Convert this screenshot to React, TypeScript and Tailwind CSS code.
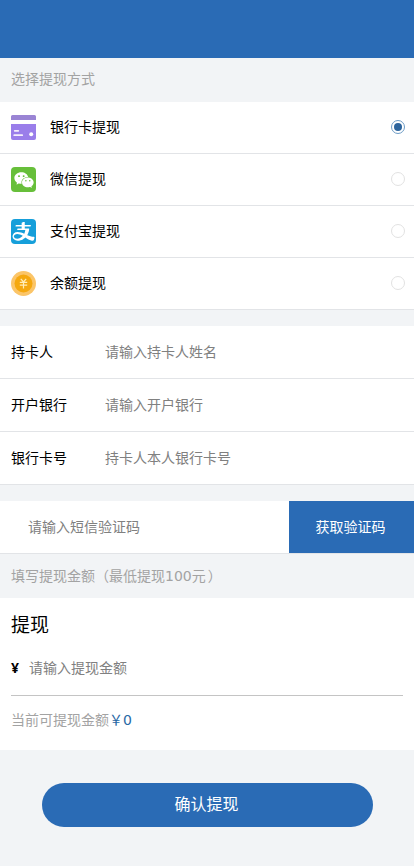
import { useState } from "react";
import type { ReactNode } from "react";
import { AiFillAlipaySquare, AiFillWechat } from "react-icons/ai";

interface Method {
  id: string;
  label: string;
  icon: ReactNode;
}

interface Field {
  name: string;
  label: string;
  placeholder: string;
}

function CardIcon() {
  return (
    <svg className="w-[25px] h-[25px]" viewBox="0 0 25 25">
      <path d="M1.5 0h22A1.5 1.5 0 0 1 25 1.5V5H0V1.5A1.5 1.5 0 0 1 1.5 0z" fill="#9a84d4" />
      <path d="M0 9h25v14a2 2 0 0 1-2 2H2a2 2 0 0 1-2-2z" fill="#9a7eea" />
      <path d="M3.7 15.8h3.6M3.2 20.2h8" stroke="#f4eefc" strokeWidth="1.7" strokeLinecap="round" />
      <circle cx="20.2" cy="19.3" r="2" fill="#fff" />
    </svg>
  );
}

function WechatIcon() {
  return (
    <span className="flex w-[25px] h-[25px] items-center justify-center rounded bg-[#67bf3a]">
      <AiFillWechat className="w-[22px] h-[22px] text-white" />
    </span>
  );
}

function AlipayIcon() {
  return (
    <span className="flex w-[25px] h-[25px] items-center justify-center overflow-hidden rounded bg-white">
      <AiFillAlipaySquare className="w-[39px] h-[39px] shrink-0 text-[#169fda]" />
    </span>
  );
}

function CoinIcon() {
  return (
    <svg className="w-[25px] h-[25px]" viewBox="0 0 25 25">
      <circle cx="12.5" cy="12.5" r="12.5" fill="#fbc569" />
      <circle cx="12.5" cy="12.5" r="9" fill="#f5a80f" />
      <path
        d="M9.8 7.8l2.7 3.2 2.7-3.2M8.8 11.4h7.4M8.8 14.2h7.4M12.5 11v6.6"
        fill="none"
        stroke="#ffedb8"
        strokeWidth="1.2"
      />
    </svg>
  );
}

const METHODS: Method[] = [
  { id: "card", label: "银行卡提现", icon: <CardIcon /> },
  { id: "wechat", label: "微信提现", icon: <WechatIcon /> },
  { id: "alipay", label: "支付宝提现", icon: <AlipayIcon /> },
  { id: "balance", label: "余额提现", icon: <CoinIcon /> },
];

const FIELDS: Field[] = [
  { name: "holder", label: "持卡人", placeholder: "请输入持卡人姓名" },
  { name: "bank", label: "开户银行", placeholder: "请输入开户银行" },
  { name: "cardNo", label: "银行卡号", placeholder: "持卡人本人银行卡号" },
];

export default function App() {
  const [method, setMethod] = useState("card");

  return (
    <div className="min-h-[866px] bg-[#f2f4f6] font-['DejaVu_Sans','Noto_Sans_CJK_SC',sans-serif] text-sm text-black">
      <header className="h-[58px] bg-[#2a6bb5]" />

      <h2 className="flex h-11 items-center px-[11px] pb-0.5 text-[#a3a3a3]">选择提现方式</h2>

      <div className="bg-white">
        {METHODS.map((m) => (
          <label
            key={m.id}
            className="flex h-[52px] items-center border-b border-[#e2e4e7] pl-[11px] pr-[9px]"
          >
            {m.icon}
            <span className="ml-3.5 flex-1 pb-0.5">{m.label}</span>
            <input
              type="radio"
              name="method"
              checked={method === m.id}
              onChange={() => setMethod(m.id)}
              className="peer sr-only"
            />
            <span className="mb-0.5 flex h-3.5 w-3.5 items-center justify-center rounded-full border border-[#e2e2e2] peer-checked:border-[#6d9cc6]">
              {method === m.id && <span className="h-2 w-2 rounded-full bg-[#2c649d]" />}
            </span>
          </label>
        ))}
      </div>

      <div className="mt-4 bg-white">
        {FIELDS.map((f) => (
          <label
            key={f.name}
            className="flex h-[53px] items-center border-b border-[#e2e4e7] px-[11px]"
          >
            <span className="w-[94px]">{f.label}</span>
            <input
              name={f.name}
              placeholder={f.placeholder}
              className="min-w-0 flex-1 outline-none placeholder:text-[#808080]"
            />
          </label>
        ))}
      </div>

      <div className="mt-4 flex h-[53px] border-b border-[#e2e4e7] bg-white">
        <input
          name="smsCode"
          placeholder="请输入短信验证码"
          className="min-w-0 flex-1 pl-7 outline-none placeholder:text-[#808080]"
        />
        <button className="w-[125px] bg-[#2a6bb5] pr-0.5 text-white">获取验证码</button>
      </div>

      <h2 className="flex h-11 items-center px-[11px] text-[#a3a3a3]">
        填写提现金额（最低提现100元<span className="ml-0.5">）</span>
      </h2>

      <div className="h-[152px] bg-white px-[11px] pt-3">
        <h3 className="text-[19px] leading-[30px]">提现</h3>
        <div className="flex h-14 items-center border-b border-[#c4c4c4]">
          <span className="w-[18px] font-['Noto_Sans',sans-serif] font-bold">¥</span>
          <input
            name="amount"
            placeholder="请输入提现金额"
            className="min-w-0 flex-1 outline-none placeholder:text-[#808080]"
          />
        </div>
        <p className="flex h-12 items-center text-[#a3a3a3]">
          当前可提现金额<span className="text-[#2a69a5]">￥0</span>
        </p>
      </div>

      <div className="px-[42px] pt-[33px]">
        <button className="h-11 w-[331px] rounded-full bg-[#2a6bb5] pr-0.5 text-base text-white">
          确认提现
        </button>
      </div>
    </div>
  );
}
